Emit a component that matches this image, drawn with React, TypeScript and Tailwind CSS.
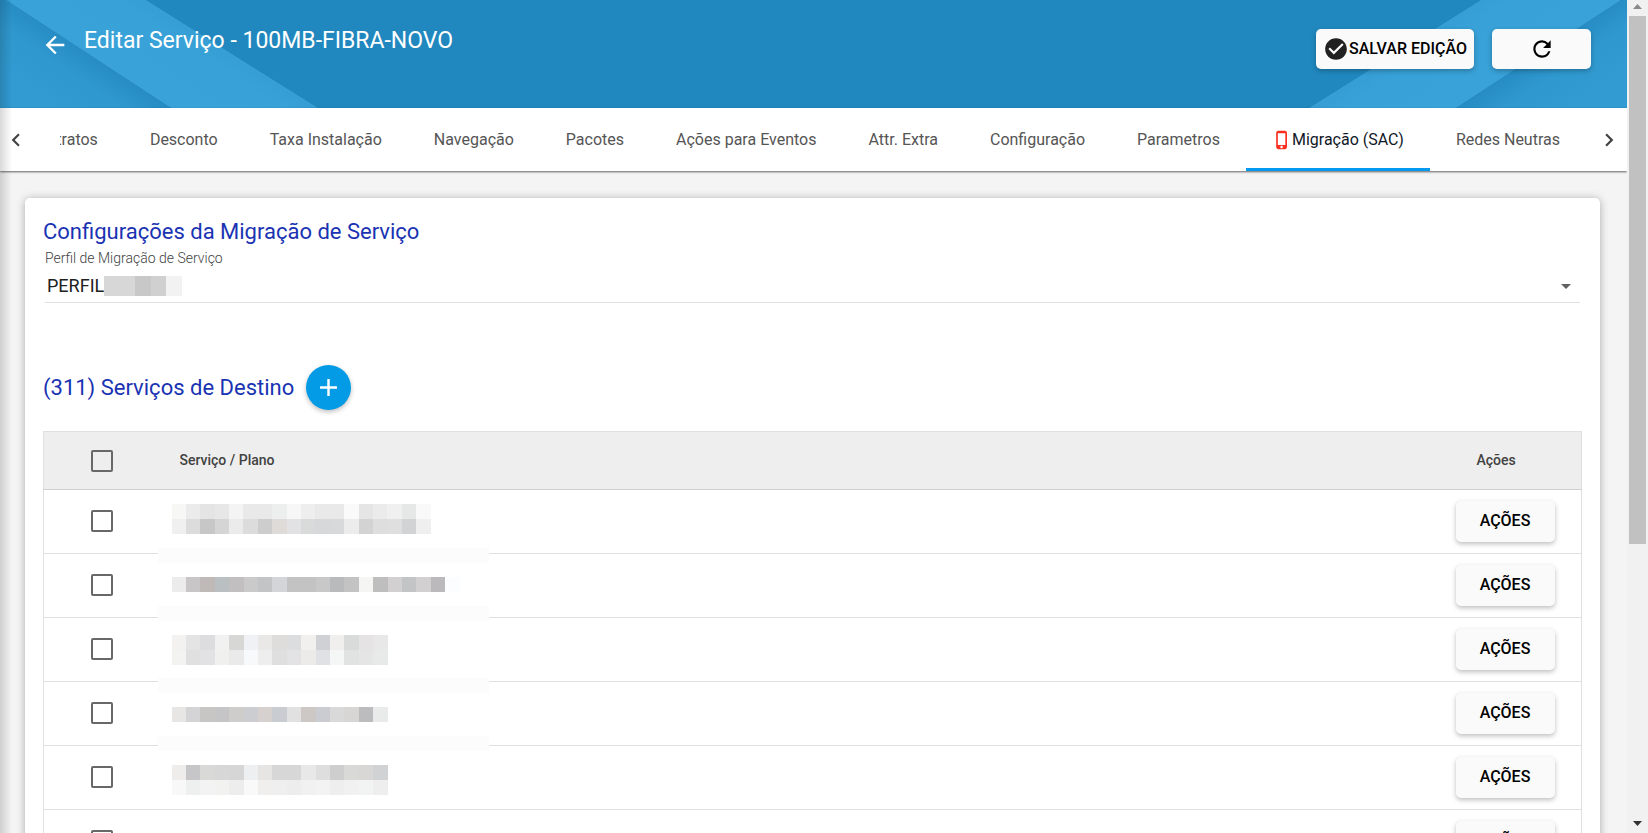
import { useState } from 'react';
import {
  MdAdd,
  MdArrowBack,
  MdArrowDropDown,
  MdCheckCircle,
  MdChevronLeft,
  MdChevronRight,
  MdPhoneIphone,
  MdRefresh,
} from 'react-icons/md';

/* ---------- TYPES ---------- */
interface Service {
  id: number;
  width: string;
  offset: string;
  strip?: string;
  cells: string[][];
}

/* ---------- DATA ---------- */
const TABS = [
  'Contratos',
  'Desconto',
  'Taxa Instalação',
  'Navegação',
  'Pacotes',
  'Ações para Eventos',
  'Attr. Extra',
  'Configuração',
  'Parametros',
  'Migração (SAC)',
  'Redes Neutras',
];

// hidden service names, one colour per block
const SERVICES: Service[] = [
  {
    id: 1,
    width: 'w-[259px]',
    offset: 'pt-[14px]',
    cells: [
      ['#f7f7f5', '#ebebeb', '#e4e4e4', '#e7e7e7', '#f4f4f4', '#e9e9e9', '#e9e9e9', '#edefee', '#f7f7f7', '#eeeeee', '#e9e9e9', '#e9e9e9', '#fafafa', '#e5e5e5', '#ebebeb', '#f0f0f0', '#e6e8e7', '#f9f9f9'],
      ['#f0f0f0', '#dcdcdc', '#c7c7c7', '#d5d5d5', '#ebebeb', '#dcdcdc', '#cdcdcd', '#dedbd9', '#e2e2e4', '#d9dbda', '#d7d8d9', '#d8d9da', '#ececec', '#d3d3d3', '#dedede', '#dfdfdf', '#d2d3d5', '#efefef'],
    ],
  },
  {
    id: 2,
    width: 'w-[288px]',
    offset: 'pt-[23px]',
    strip: '-top-[6px]',
    cells: [
      ['#ececec', '#c8c6c7', '#bfb9b8', '#babfc2', '#c2bfc0', '#cacaca', '#c3c4c6', '#d4d5d8', '#c3c3c3', '#c3c3c3', '#c8c8c8', '#b9babc', '#c3c3c3', '#f5f5f3', '#bebebe', '#d2d0d1', '#c3c4c6', '#d2d0d1', '#bbb9bc', '#fcfdff'],
    ],
  },
  {
    id: 3,
    width: 'w-[216px]',
    offset: 'pt-[17px]',
    strip: '-top-[12px]',
    cells: [
      ['#f3f2f0', '#e4e4e4', '#dddde0', '#f1f1f1', '#d7d7d5', '#eff1f4', '#e9e8e6', '#dedddb', '#dbddde', '#f2f0ee', '#d0d1d5', '#f0efed', '#d9dbdb', '#e5e3e4', '#e8e8e8'],
      ['#f3f3f1', '#e0e0e0', '#e2e2e5', '#f0f0ee', '#eaeaea', '#f8f9fb', '#eeeeee', '#dfdfdf', '#e3e3e6', '#edebe9', '#e0e1e4', '#f5f7f6', '#e1e3e2', '#e5e5e5', '#e8eae9'],
    ],
  },
  {
    id: 4,
    width: 'w-[216px]',
    offset: 'pt-[25px]',
    strip: '-top-[4px]',
    cells: [
      ['#e7e6e4', '#d4d4d6', '#c7c6c4', '#c5c5c8', '#cfcdcc', '#cbcdd0', '#d6d1ce', '#c9cdd1', '#e1e1e1', '#cdc8c5', '#cbccd1', '#d9d9d9', '#d7d6d4', '#bcbcbe', '#e9ebea'],
    ],
  },
  {
    id: 5,
    width: 'w-[216px]',
    offset: 'pt-[19px]',
    strip: '-top-[10px]',
    cells: [
      ['#eeedeb', '#c6c6c9', '#d9d9d7', '#d7d7d7', '#d6d6d6', '#eeeff1', '#e6e5e3', '#d7d7d7', '#d7d7d7', '#e8e8e8', '#dedede', '#cecece', '#d9d9d7', '#d8d7d5', '#d1d2d4'],
      ['#f8f8f8', '#eef0ef', '#f3f3f3', '#f2f2f0', '#ededed', '#f9f9f9', '#f0efed', '#efefef', '#ededed', '#f1f1f1', '#f3f3f3', '#eeeeee', '#f1f1f1', '#f2f4f3', '#eeeeee'],
    ],
  },
  { id: 6, width: 'w-[216px]', offset: 'pt-[19px]', cells: [] },
];

/* ---------- INLINE UI ---------- */
const RaisedButton = ({
  children,
  className = '',
  label,
}: {
  children: React.ReactNode;
  className?: string;
  label?: string;
}) => (
  <button
    type="button"
    aria-label={label}
    className={`inline-flex items-center justify-center rounded-[5px] bg-[#fafafa] text-base font-medium uppercase text-black shadow-[0_2px_5px_rgba(0,0,0,0.26)] ${className}`}
  >
    {children}
  </button>
);

const Checkbox = ({ label }: { label: string }) => (
  <input
    type="checkbox"
    aria-label={label}
    className="block size-[22px] appearance-none rounded-[2px] border-2 border-[#686868] checked:bg-[#039be5]"
  />
);

const Ribbon = ({ id, className }: { id: string; className: string }) => (
  <svg className={`absolute top-0 h-[108px] w-[320px] ${className}`} viewBox="0 0 320 108" aria-hidden="true">
    <defs>
      <linearGradient id={`${id}-band`} gradientUnits="userSpaceOnUse" x1="193" y1="108" x2="245" y2="28">
        <stop offset="0" stopColor="#39a2d8" />
        <stop offset="0.5" stopColor="#38a1d7" />
        <stop offset="1" stopColor="#3199cf" />
      </linearGradient>
      <linearGradient id={`${id}-corner`} gradientUnits="userSpaceOnUse" x1="54" y1="108" x2="90" y2="54">
        <stop offset="0" stopColor="#319bd2" />
        <stop offset="0.6" stopColor="#2f98ce" />
        <stop offset="1" stopColor="#268cc3" />
      </linearGradient>
    </defs>
    <path d="M0 0H145L317 108H0Z" fill={`url(#${id}-band)`} />
    <path d="M0 0H7L172 108H0Z" fill={`url(#${id}-corner)`} />
    <path d="M145 0L317 108M7 0L172 108" stroke="#45a9dc" strokeOpacity="0.6" fill="none" />
  </svg>
);

const Mosaic = ({ service }: { service: Service }) => (
  <div className={service.width}>
    {service.cells.map((line, i) => (
      <div key={i} className="flex h-[15px]">
        {line.map((color, j) => (
          <span key={j} className="flex-1" style={{ backgroundColor: color }} />
        ))}
      </div>
    ))}
  </div>
);

/* ---------- PAGE ---------- */
const App = () => {
  const [activeTab, setActiveTab] = useState('Migração (SAC)');

  return (
    <div className="flex h-screen overflow-hidden bg-[#f4f4f4] font-[Roboto,sans-serif] text-black">
      <main className="relative min-w-0 flex-1 overflow-hidden">
        {/* Header */}
        <header className="relative flex h-[108px] items-start justify-between overflow-hidden bg-[#2088be] pl-[41px] pr-9">
          <Ribbon id="left" className="left-0" />
          <Ribbon id="right" className="right-0 -scale-x-100" />
          <div className="relative flex pt-[25px] text-white">
            <a href="#voltar" aria-label="Voltar" className="mt-[6px]">
              <MdArrowBack className="size-7" />
            </a>
            <h1 className="ml-[15px] text-[23px] leading-8">Editar Serviço - 100MB-FIBRA-NOVO</h1>
          </div>
          <div className="relative flex gap-[18px] pt-[29px]">
            <RaisedButton className="h-10 w-[158px]">
              <MdCheckCircle className="size-[26px] text-[#212121]" />
              Salvar edição
            </RaisedButton>
            <RaisedButton className="h-10 w-[99px]" label="Atualizar">
              <MdRefresh className="size-[26px]" />
            </RaisedButton>
          </div>
        </header>

        {/* Tabs */}
        <nav className="relative flex h-[63px] items-stretch bg-white shadow-[0_1px_2px_rgba(0,0,0,0.6)]">
          <button type="button" aria-label="Abas anteriores" className="flex w-[60px] shrink-0 items-center pl-[3px]">
            <MdChevronLeft className="size-[26px] text-[#424242]" />
          </button>
          <div role="tablist" className="flex min-w-0 flex-1 justify-end overflow-hidden">
            {TABS.map((tab) => (
              <button
                key={tab}
                type="button"
                role="tab"
                aria-selected={tab === activeTab}
                onClick={() => setActiveTab(tab)}
                className={`flex shrink-0 items-center whitespace-nowrap border-b-[3px] px-[26px] pt-[3px] text-base ${
                  tab === activeTab ? 'border-[#0399ee] text-[#111827]' : 'border-transparent text-[#555555]'
                }`}
              >
                {tab === 'Migração (SAC)' && <MdPhoneIphone className="size-5 text-[#fb3020]" />}
                {tab}
              </button>
            ))}
          </div>
          <button type="button" aria-label="Próximas abas" className="flex w-[41px] shrink-0 items-center pl-[10px]">
            <MdChevronRight className="size-[26px] text-[#424242]" />
          </button>
        </nav>

        {/* Card */}
        <section className="ml-[25px] mr-[27px] mt-[27px] rounded-[5px] bg-white px-[18px] pt-[18px] shadow-[0_1px_8px_rgba(0,0,0,0.3)]">
          <h2 className="text-[22px] leading-8 text-[#1a33b3]">Configurações da Migração de Serviço</h2>

          <div className="mx-[2px] border-b border-[#e0e0e0]">
            <label htmlFor="perfil" className="block text-sm font-light text-[#424242]">
              Perfil de Migração de Serviço
            </label>
            <div className="relative mt-[2px] flex h-8 items-center">
              <select id="perfil" className="h-8 w-full appearance-none bg-transparent pl-[2px] text-lg text-[#212121]">
                <option>PERFIL</option>
              </select>
              <span className="absolute left-[59px] flex h-5 w-[78px]">
                <span className="flex-2 bg-[#d7d7d7]" />
                <span className="flex-1 bg-[#c8c8c8]" />
                <span className="flex-1 bg-[#d0d0d0]" />
                <span className="flex-1 bg-[#f2f2f2]" />
              </span>
              <MdArrowDropDown className="pointer-events-none absolute right-[2px] size-6 text-[#616161]" />
            </div>
          </div>

          <div className="mt-[62px] flex items-center gap-3">
            <h2 className="text-[22px] leading-8 text-[#1a33b3]">(311) Serviços de Destino</h2>
            <button
              type="button"
              aria-label="Adicionar serviço"
              className="flex size-[45px] items-center justify-center rounded-full bg-[#039be5] text-white shadow-[0_2px_5px_rgba(0,0,0,0.26)]"
            >
              <MdAdd className="size-[29px]" />
            </button>
          </div>

          <table className="mt-[21px] w-full border-collapse border border-[#e0e0e0]">
            <thead>
              <tr className="h-[58px] border-b border-[#d0d0d0] bg-[#eeeeee] text-left text-sm text-[#424242]">
                <th className="w-32 pl-[47px]">
                  <Checkbox label="Selecionar todos" />
                </th>
                <th className="pb-[2px] pl-2 font-medium">Serviço / Plano</th>
                <th className="w-[126px] pb-[2px] pl-[21px] font-medium">Ações</th>
              </tr>
            </thead>
            <tbody>
              {SERVICES.map((service) => (
                <tr key={service.id} className="h-16 border-b border-[#e0e0e0]">
                  <td className="pb-[2px] pl-[47px]">
                    <Checkbox label={`Selecionar serviço ${service.id}`} />
                  </td>
                  <td className={`relative align-top ${service.offset}`}>
                    {service.strip && (
                      <span className={`absolute -left-[14px] h-[15px] w-[331px] bg-[#fcfcfc] ${service.strip}`} />
                    )}
                    <Mosaic service={service} />
                  </td>
                  <td>
                    <RaisedButton className="h-[41px] w-[99px] pb-[2px]">Ações</RaisedButton>
                  </td>
                </tr>
              ))}
            </tbody>
          </table>
        </section>

        <div className="pointer-events-none absolute inset-y-0 left-0 w-3 bg-linear-to-r from-black/15 to-transparent" />
      </main>

      {/* Scrollbar */}
      <div className="flex w-[21px] shrink-0 flex-col items-center bg-[#f1f1f1]" aria-hidden="true">
        <svg className="h-4 w-[17px]" viewBox="0 0 17 16">
          <path d="M4 9L8.500 4L13 9Z" fill="#8a8a8a" />
        </svg>
        <div className="h-[528px] w-[17px] bg-[#c1c1c1]" />
        <svg className="mt-auto h-[17px] w-[17px]" viewBox="0 0 17 17">
          <path d="M4 5L8.500 10L13 5Z" fill="#333" />
        </svg>
      </div>
    </div>
  );
};

export default App;
